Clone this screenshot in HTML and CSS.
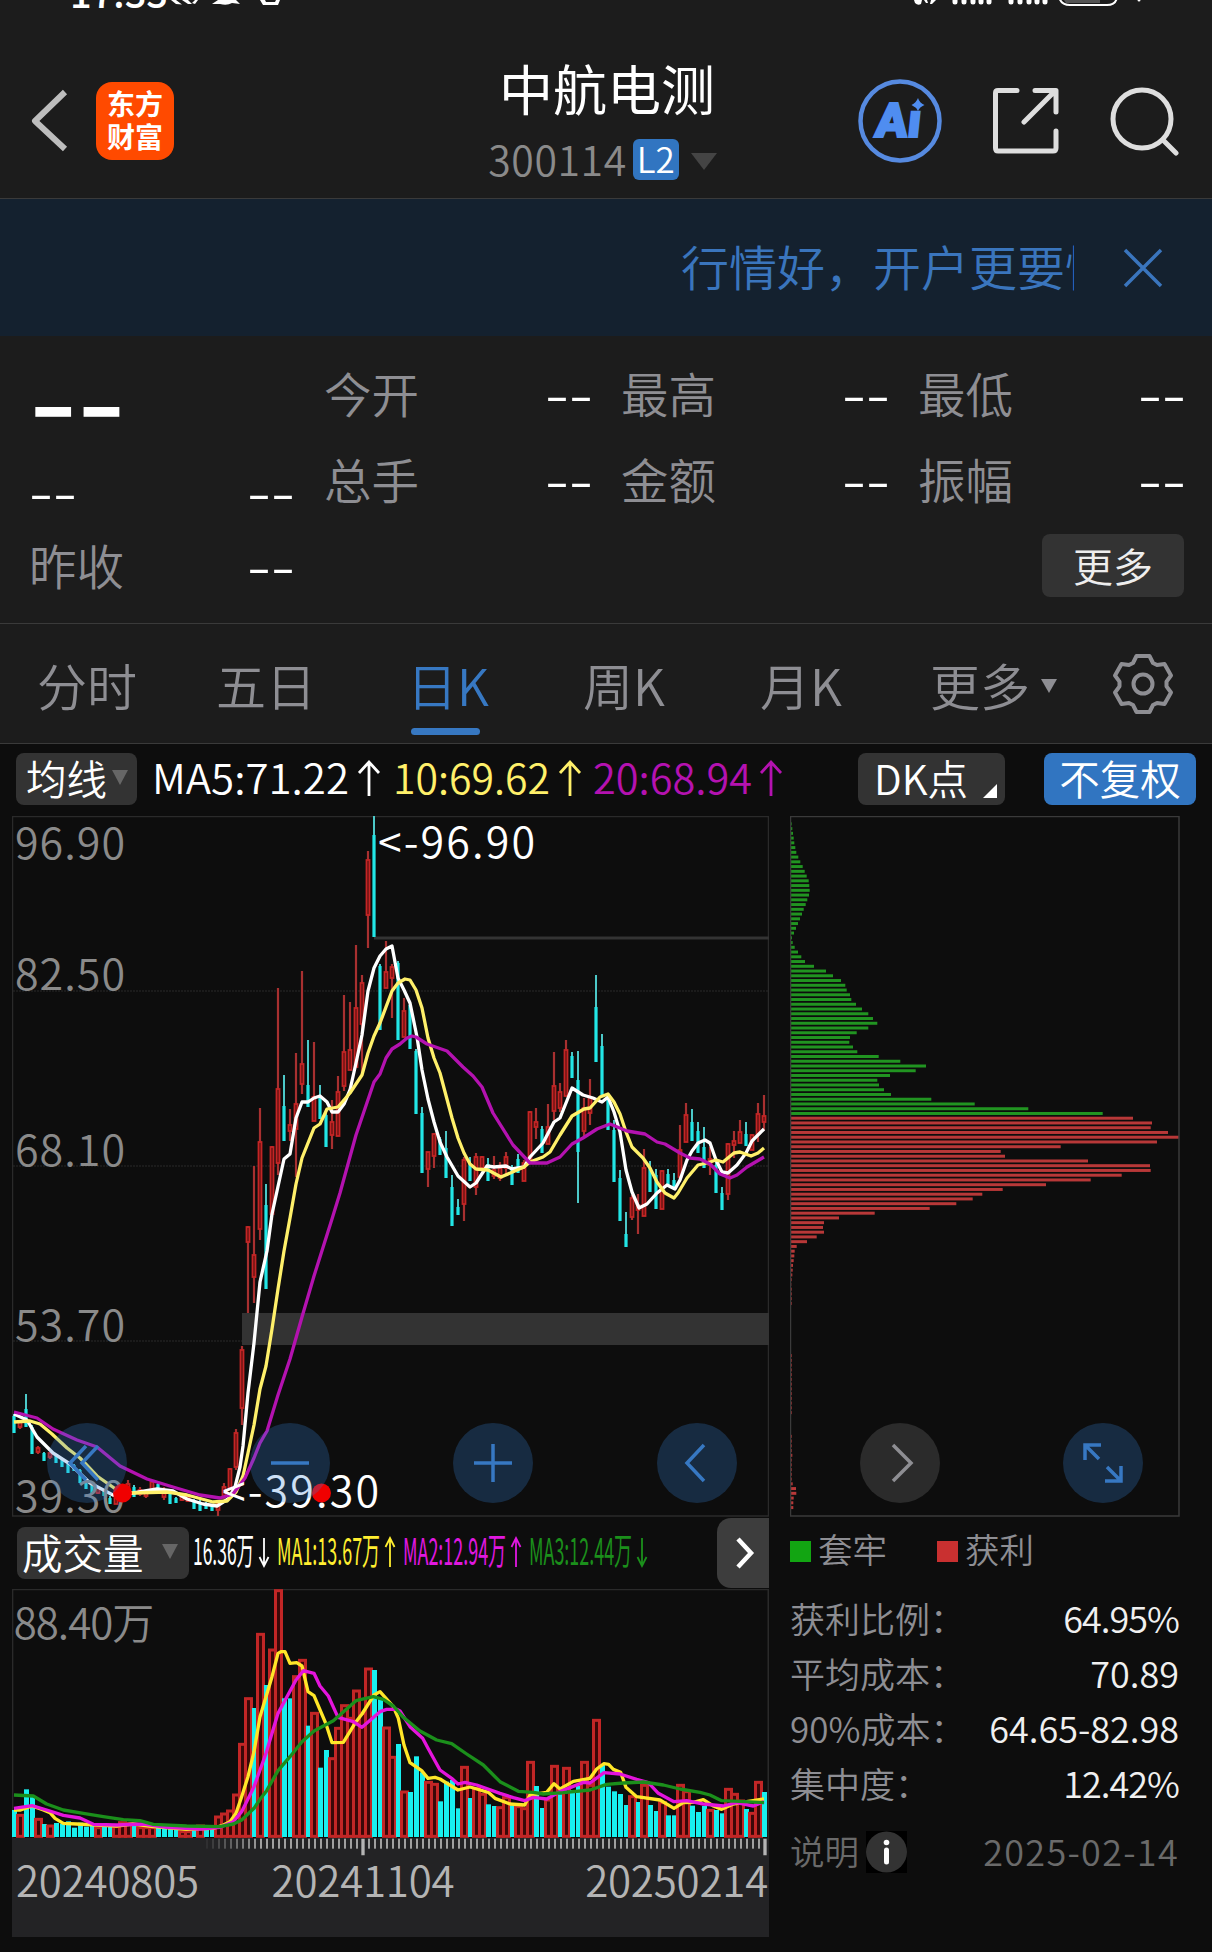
FILE: index.html
```html
<!DOCTYPE html>
<html lang="zh-CN">
<head>
    <meta charset="UTF-8">
    <meta name="viewport" content="width=device-width, initial-scale=1.0">
    <title>中航电测 300114</title>
    <link rel="stylesheet" href="styles.css">
</head>
<body>
    <div class="status-bar">
        <div class="status-left">
            <span class="time">17:33</span>
            <svg width="130" height="8" viewBox="0 0 130 8" fill="#fff">
                <path d="M9 0L14 4L20 4.500L14 0ZM20 0L26 4L30 4L26 0ZM30 3L33 4L36 0H33Z"/>
                <path d="M50 4L56 0H74L78 4L70 3Q65 6 58 4Z"/>
                <path d="M98 0H103L104 2H113L114 0H118L116 5H101Z"/>
            </svg>
        </div>
        <svg width="240" height="8" viewBox="0 0 240 8" fill="#fff">
            <path d="M0 0H8L7 4Q4 6 1 3ZM10 0H13L14 3H12ZM17 0H22L18 4H16Z"/>
            <path d="M41 0V2M50 0V2M59 0V2M67 0V2M75 0V2M97 0V2M106 0V2M115 0V2M123 0V2M131 0V2" stroke="#fff" stroke-width="5" stroke-linecap="round"/>
            <path d="M150 0H186V3H152Z" fill="#555"/>
            <path d="M145 -3Q147 5 156 5H193Q202 5 203 -3" fill="none" stroke="#fff" stroke-width="2"/>
            <circle cx="225" cy="0" r="1.500"/>
        </svg>
    </div>

    <header class="header">
        <div class="header-side">
            <svg class="back" width="38" height="64" viewBox="0 0 38 64"><path d="M35 3L5 32L35 60" fill="none" stroke="#bdbdbd" stroke-width="6" stroke-linejoin="round"/></svg>
            <div class="logo">东方<br>财富</div>
        </div>
        <div class="stock">
            <div class="stock-name">中航电测</div>
            <div class="stock-code"><span class="code">300114</span><span class="level">L2</span><i class="tri tri-code"></i></div>
        </div>
        <div class="header-side header-right">
            <svg width="84" height="84" viewBox="0 0 84 84">
                <circle cx="42" cy="42" r="39.500" fill="none" stroke="#568ae0" stroke-width="4.500"/>
                <text class="ai-text" x="22" y="58" textLength="46" lengthAdjust="spacingAndGlyphs" transform="skewX(-6)">Aı</text>
                <path d="M60 19Q61.500 24 66.500 26Q61.500 28 60 32Q58 28 53.500 26Q58 24 60 19Z" fill="#4f8df0"/>
            </svg>
            <svg width="68" height="68" viewBox="0 0 68 68" fill="none" stroke="#dedede" stroke-width="5" stroke-linecap="round" stroke-linejoin="round">
                <path d="M25 3.500H6Q3.500 3.500 3.500 6V61Q3.500 64 6 64H61Q64 64 64 61V44M43 3.500H64V25M63 4L32 35"/>
            </svg>
            <svg width="70" height="70" viewBox="0 0 70 70" fill="none" stroke="#dedede" stroke-width="5" stroke-linecap="round">
                <circle cx="33" cy="33" r="29"/><path d="M55 55L67 67"/>
            </svg>
        </div>
    </header>

    <div class="notice">
        <div class="notice-text">行情好，开户更要快</div>
        <svg width="40" height="40" viewBox="0 0 40 40"><path d="M2 2L38 38M38 2L2 38" stroke="#3a75bd" stroke-width="3.500"/></svg>
    </div>

    <section class="quote">
        <div class="quote-price">
            <div class="big-price"><b class="dash-big">--</b></div>
            <div class="price-row low"><span class="dash from-left">--</span><span class="dash">--</span></div>
            <div class="price-row"><span class="label">昨收</span><span class="dash">--</span></div>
        </div>
        <div class="quote-grid">
            <div class="item"><span class="label">今开</span><span class="dash">--</span></div>
            <div class="item"><span class="label">最高</span><span class="dash">--</span></div>
            <div class="item"><span class="label">最低</span><span class="dash">--</span></div>
            <div class="item"><span class="label">总手</span><span class="dash">--</span></div>
            <div class="item"><span class="label">金额</span><span class="dash">--</span></div>
            <div class="item"><span class="label">振幅</span><span class="dash">--</span></div>
            <button class="more">更多</button>
        </div>
    </section>

    <nav class="tabs">
        <a class="tab">分时</a>
        <a class="tab">五日</a>
        <a class="tab active">日K</a>
        <a class="tab">周K</a>
        <a class="tab">月K</a>
        <a class="tab">更多<i class="tri tri-tab"></i></a>
        <svg class="gear" width="62" height="62" viewBox="-31 -31 62 62" fill="none" stroke="#8e8e93" stroke-width="4" stroke-linejoin="round">
            <path d="M-10 -21L-6.500 -28H6.500L10 -21L14 -19L21.500 -20L28 -8.500L23.500 -2.300V2.300L28 8.500L21.500 20L14 19L10 21L6.500 28H-6.500L-10 21L-14 19L-21.500 20L-28 8.500L-23.500 2.300V-2.300L-28 -8.500L-21.500 -20L-14 -19Z"/>
            <circle r="9.500"/>
        </svg>
    </nav>

    <main class="charts">
        <div class="ma-bar">
            <button class="pill pill-ma">均线<i class="tri tri-ma"></i></button>
            <svg class="ma-text" width="640" height="52" viewBox="147 753 640 52">
                <text x="152" y="794" textLength="197" lengthAdjust="spacingAndGlyphs" fill="#fff">MA5:71.22</text>
                <text x="393" y="794" textLength="157" lengthAdjust="spacingAndGlyphs" fill="#fff06a">10:69.62</text>
                <text x="593" y="794" textLength="159" lengthAdjust="spacingAndGlyphs" fill="#b412b0">20:68.94</text>
                <g fill="none" stroke-width="2.800">
                    <path d="M369 796V762M359 773L369 762L379 773" stroke="#fff"/>
                    <path d="M570 796V762M560 773L570 762L580 773" stroke="#fff06a"/>
                    <path d="M771 796V762M761 773L771 762L781 773" stroke="#b412b0"/>
                </g>
            </svg>
            <button class="pill pill-dk">DK点<i class="corner"></i></button>
            <button class="pill pill-fq">不复权</button>
        </div>

        <div class="columns">
            <div class="left">
                <svg class="kline" width="757" height="701" viewBox="12 816 757 701">
                    <g fill="none" stroke="#2a2a2a">
                        <rect x="12.500" y="816.500" width="756" height="699.500" stroke-width="1.500"/>
                        <path d="M13 991H768M13 1166H768M13 1341H768" stroke-dasharray="2 1"/>
                    </g>
                    <rect x="242" y="1313" width="527" height="32" fill="#333"/>
                    <path d="M374 938H769" stroke="#333" stroke-width="3"/>
                    <g id="candles"></g>
                    <g fill="none" stroke-width="3.300" stroke-linejoin="round">
                        <polyline stroke="#fff" points="14,1414 27,1420 37,1437 53,1453 70,1464 90,1483 113,1495 133,1493 157,1489 173,1491 187,1499 203,1504 217,1506 228,1499 235,1487 240,1467 243,1446 248,1393 254,1343 260,1282 267,1251 272,1214 284,1159 290,1154 296,1118 302,1102 308,1102 314,1098 320,1096 327,1102 332,1112 338,1112 344,1104 350,1090 356,1063 362,1035 368,991 374,968 380,956 386,949 392,946 398,978 404,990 410,1003 417,1037 422,1070 428,1099 434,1122 440,1142 447,1157 458,1176 470,1187 476,1183 487,1166 494,1167 506,1166 512,1169 524,1167 530,1157 543,1143 554,1122 560,1118 572,1088 583,1095 593,1098 602,1102 608,1097 614,1112 620,1132 626,1170 632,1192 639,1208 647,1204 657,1193 667,1185 675,1189 680,1180 687,1160 692,1151 698,1143 705,1140 710,1143 716,1160 722,1172 728,1173 737,1165 746,1153 752,1141 764,1129"/>
                        <polyline stroke="#fff06a" points="14,1422 30,1421 40,1424 52,1434 67,1448 80,1458 97,1476 117,1490 133,1493 167,1492 187,1495 213,1502 227,1501 236,1492 243,1476 248,1453 254,1425 260,1389 266,1366 272,1329 278,1289 284,1251 290,1218 296,1184 302,1158 314,1128 320,1124 327,1109 338,1107 350,1093 362,1075 368,1053 374,1036 380,1023 392,991 398,983 405,979 410,980 416,990 422,1008 428,1038 434,1058 440,1073 452,1118 458,1138 464,1153 470,1164 476,1169 488,1170 501,1177 524,1167 530,1162 543,1157 550,1152 560,1135 572,1116 584,1109 590,1108 600,1097 608,1094 614,1102 620,1114 626,1132 632,1147 643,1158 650,1168 657,1182 665,1193 674,1198 678,1193 687,1178 698,1165 707,1163 716,1160 723,1162 734,1153 740,1152 751,1156 758,1153 764,1148"/>
                        <polyline stroke="#b412b0" points="14,1412 37,1418 53,1429 77,1440 97,1447 120,1466 147,1479 173,1487 200,1495 220,1498 233,1494 245,1478 254,1458 260,1443 267,1431 278,1395 290,1359 302,1317 314,1276 332,1219 340,1193 356,1135 374,1082 380,1074 386,1058 392,1049 400,1044 407,1038 412,1036 416,1037 427,1044 447,1051 463,1067 473,1076 482,1087 493,1113 513,1145 530,1163 547,1163 560,1157 572,1144 583,1138 597,1129 610,1124 627,1131 645,1134 657,1142 665,1144 680,1153 690,1158 700,1159 710,1164 720,1174 730,1178 737,1175 747,1167 764,1157"/>
                    </g>
                    <g class="axis-text">
                        <text x="15" y="859" textLength="110">96.90</text>
                        <text x="15" y="990" textLength="110">82.50</text>
                        <text x="15" y="1166" textLength="110">68.10</text>
                        <text x="15" y="1341" textLength="110">53.70</text>
                        <text x="15" y="1512" textLength="110">39.30</text>
                    </g>
                    <g class="mark-text">
                        <text x="378" y="858" textLength="157">&lt;-96.90</text>
                        <text x="222" y="1507" textLength="157">&lt;-39.30</text>
                    </g>
                    <circle cx="122.500" cy="1493" r="9.500" fill="#f00000"/>
                    <circle cx="321.500" cy="1493" r="9.500" fill="#f00000"/>
                </svg>

                <div class="vol-bar">
                    <button class="pill pill-vol">成交量<i class="tri tri-ma"></i></button>
                    <svg class="vol-text" width="460" height="52" viewBox="192 1527 460 52">
                        <text x="193" y="1565" textLength="61" lengthAdjust="spacingAndGlyphs" fill="#fff">16.36万</text>
                        <text x="277" y="1565" textLength="103" lengthAdjust="spacingAndGlyphs" fill="#ffee30">MA1:13.67万</text>
                        <text x="403" y="1565" textLength="103" lengthAdjust="spacingAndGlyphs" fill="#e018e0">MA2:12.94万</text>
                        <text x="529" y="1565" textLength="103" lengthAdjust="spacingAndGlyphs" fill="#1b8f1b">MA3:12.44万</text>
                        <g fill="none" stroke-width="1.800">
                            <path d="M264 1538V1566M259.500 1557L264 1566L268.500 1557" stroke="#fff"/>
                            <path d="M390 1567V1538M385.500 1547L390 1538L394.500 1547" stroke="#ffee30"/>
                            <path d="M516 1567V1538M511.500 1547L516 1538L520.500 1547" stroke="#e018e0"/>
                            <path d="M642 1538V1566M637.500 1557L642 1566L646.500 1557" stroke="#1b8f1b"/>
                        </g>
                    </svg>
                    <button class="vol-next"><svg width="24" height="36" viewBox="0 0 24 36"><path d="M5 4L18 18L5 32" fill="none" stroke="#fff" stroke-width="4.500"/></svg></button>
                </div>

                <!-- volume units are thirds of a pixel -->
                <svg class="volume" width="757" height="249" viewBox="36 27 2271 747">
                    <path d="M37.500 774V28.500H2305V774" fill="none" stroke="#2a2a2a" stroke-width="5"/>
                    <text class="vol-max" x="41" y="177" textLength="422">88.40万</text>
                    <g id="bars"></g>
                    <g fill="none" stroke-width="10" stroke-linejoin="round">
                        <polyline stroke="#ffe628" points="42,690 62,690 96,678 130,690 150,698 165,715 190,730 230,732 290,735 350,738 400,732 460,740 560,748 640,745 670,735 690,725 708,700 725,650 744,590 762,515 780,410 798,350 816,290 834,220 843,215 855,215 870,250 890,248 906,258 924,335 942,347 978,432 996,488 1030,487 1068,425 1086,402 1122,345 1140,335 1180,380 1195,415 1212,495 1230,548 1265,572 1284,595 1305,592 1320,597 1374,630 1410,621 1465,637 1485,655 1530,672 1574,675 1590,645 1640,637 1662,611 1680,627 1720,604 1770,595 1790,567 1812,551 1826,553 1840,568 1862,577 1878,622 1910,650 1980,660 2022,685 2050,668 2080,667 2110,659 2140,678 2165,688 2200,672 2240,665 2292,657"/>
                        <polyline stroke="#e414dc" points="42,685 96,677 140,690 190,706 240,714 280,733 350,735 430,732 500,742 600,747 660,742 700,725 725,695 762,620 780,570 798,520 834,400 888,300 910,272 942,280 960,318 985,348 1014,412 1060,425 1086,442 1140,395 1160,388 1190,388 1200,393 1230,440 1268,475 1284,505 1320,570 1355,595 1374,612 1395,607 1430,615 1500,640 1540,653 1574,662 1600,652 1640,657 1680,635 1750,607 1770,609 1812,578 1860,582 1910,598 1945,608 1975,640 2022,665 2060,662 2110,672 2170,678 2210,668 2260,678 2292,665"/>
                        <polyline stroke="#1b8f1b" points="42,645 100,648 140,672 190,690 250,700 310,710 370,719 420,722 460,733 560,738 660,740 700,732 725,720 762,685 780,658 800,632 834,572 870,530 906,485 942,453 1000,422 1068,362 1120,350 1150,358 1180,378 1210,412 1260,453 1310,480 1355,491 1400,522 1450,555 1500,605 1555,634 1600,637 1630,642 1690,638 1770,630 1820,613 1870,609 1930,606 1990,615 2040,627 2100,637 2130,645 2165,662 2220,664 2292,668"/>
                    </g>
                </svg>
                <div class="timeline">
                    <svg width="757" height="20" viewBox="36 780 2271 60" id="ticks"></svg>
                    <div class="dates"><span>20240805</span><span>20241104</span><span>20250214</span></div>
                </div>
            </div>

            <div class="right">
                <svg class="chips" width="390" height="701" viewBox="790 816 390 701">
                    <g id="chips"></g>
                    <rect x="790.500" y="816.500" width="388.500" height="699.500" fill="none" stroke="#3a3a3a" stroke-width="1.500"/>
                </svg>
                <div class="legend">
                    <span><i class="square green"></i>套牢</span>
                    <span><i class="square red"></i>获利</span>
                </div>
                <div class="stats">
                    <div class="stat"><span>获利比例：</span><b class="percent">64.95%</b></div>
                    <div class="stat"><span>平均成本：</span><b>70.89</b></div>
                    <div class="stat"><span>90%成本：</span><b>64.65-82.98</b></div>
                    <div class="stat"><span>集中度：</span><b class="percent">12.42%</b></div>
                </div>
                <div class="explain">
                    <span>说明</span>
                    <svg width="41" height="42" viewBox="0 0 41 42"><rect width="41" height="42" fill="#000"/><circle cx="20.500" cy="21" r="20.500" fill="#333"/><circle cx="20.500" cy="11.500" r="2.800" fill="#fff"/><path d="M20.500 19V31" stroke="#fff" stroke-width="5" stroke-linecap="round"/></svg>
                    <span class="date">2025-02-14</span>
                </div>
            </div>

            <div class="controls">
                <button class="ctl"><svg viewBox="-40 -40 80 80"><path d="M-1 -17L-17 0L-1 17M11 -17L-5 0L11 17"/></svg></button>
                <button class="ctl"><svg viewBox="-40 -40 80 80"><path d="M-19 0H19"/></svg></button>
                <button class="ctl"><svg viewBox="-40 -40 80 80"><path d="M-19 0H19M0 -19V19"/></svg></button>
                <button class="ctl"><svg viewBox="-40 -40 80 80"><path d="M7 -18L-10 0L7 18"/></svg></button>
                <button class="ctl gray"><svg viewBox="-40 -40 80 80"><path d="M-7 -18L11 0L-7 18"/></svg></button>
                <button class="ctl"><svg viewBox="-40 -40 80 80"><path d="M-18 -3V-18H-2M-17 -17L-4 -4M18 3V18H2M17 17L4 4"/></svg></button>
            </div>
        </div>
    </main>

    <script>
        // direction, high, body top, body bottom, low
        const candles = [
            ['d',1414,1416,1433,1433],['u',1420,1422,1427,1429],['d',1394,1409,1427,1427],['d',1425,1427,1454,1454],['u',1446,1448,1452,1454],
            ['d',1452,1453,1461,1461],['u',1452,1453,1457,1459],['d',1455,1456,1463,1463],['d',1458,1459,1467,1467],['d',1463,1464,1473,1473],
            ['d',1464,1465,1471,1471],['d',1469,1470,1483,1483],['d',1481,1482,1489,1489],['d',1483,1484,1493,1493],['u',1487,1488,1493,1494],
            ['d',1489,1490,1496,1496],['d',1496,1498,1504,1504],['u',1490,1492,1504,1504],['u',1487,1489,1498,1500],['u',1480,1484,1494,1496],
            ['d',1485,1487,1497,1497],['u',1487,1490,1494,1496],['u',1490,1492,1496,1498],['u',1480,1482,1490,1492],['d',1483,1484,1490,1490],
            ['u',1487,1490,1497,1500],['d',1491,1493,1504,1504],['d',1497,1498,1503,1503],['u',1494,1496,1500,1501],['u',1495,1497,1501,1502],
            ['d',1499,1500,1509,1509],['d',1500,1502,1511,1511],['d',1502,1504,1509,1509],['d',1504,1505,1511,1511],['u',1501,1504,1510,1516],
            ['u',1483,1487,1497,1499],['u',1468,1469,1488,1489],['u',1429,1433,1467,1470],['u',1346,1350,1408,1425],['u',1226,1227,1242,1313],
            ['u',1166,1255,1277,1303],['u',1108,1142,1229,1240],['d',1184,1205,1289,1289],['u',1146,1147,1214,1220],['u',988,1089,1163,1175],
            ['d',1075,1106,1141,1141],['u',1109,1125,1131,1141],['u',1053,1104,1129,1177],['u',971,1064,1084,1094],['d',1040,1085,1107,1107],
            ['u',1042,1097,1121,1121],['d',1085,1097,1119,1119],['d',1111,1115,1147,1147],['u',1100,1122,1135,1149],['u',1076,1092,1136,1136],
            ['u',995,1052,1086,1091],['u',1002,1050,1070,1070],['u',945,1008,1067,1067],['u',975,983,1024,1074],['u',851,860,915,948],
            ['d',816,835,937,937],['d',964,966,1030,1030],['u',941,972,988,988],['u',964,967,978,1018],['d',961,963,1040,1040],
            ['u',998,1011,1037,1037],['d',1003,1005,1049,1049],['d',1049,1051,1114,1114],['d',1107,1113,1173,1173],['u',1152,1152,1169,1187],
            ['u',1133,1134,1156,1168],['d',1137,1139,1155,1155],['d',1131,1148,1178,1178],['d',1175,1187,1226,1226],['d',1199,1207,1215,1215],
            ['u',1157,1160,1204,1221],['d',1157,1164,1181,1181],['u',1153,1157,1187,1195],['u',1156,1157,1168,1168],['d',1158,1164,1181,1181],
            ['u',1156,1170,1176,1179],['u',1162,1168,1178,1181],['u',1152,1157,1168,1176],['d',1165,1168,1185,1185],['d',1154,1159,1173,1173],
            ['u',1160,1163,1181,1181],['u',1111,1112,1160,1160],['u',1108,1122,1127,1139],['d',1126,1129,1153,1153],['u',1104,1127,1144,1144],
            ['u',1052,1086,1111,1120],['u',1083,1092,1108,1112],['u',1040,1050,1096,1096],['d',1052,1056,1078,1078],['d',1051,1080,1152,1203],
            ['u',1098,1108,1131,1137],['u',1079,1097,1113,1125],['d',975,1007,1062,1062],['d',1034,1046,1097,1097],['d',1095,1097,1130,1130],
            ['d',1120,1130,1182,1182],['d',1170,1178,1221,1221],['d',1212,1234,1247,1247],['u',1195,1198,1217,1220],['u',1194,1205,1210,1234],
            ['u',1149,1168,1216,1216],['d',1161,1168,1192,1192],['d',1169,1175,1209,1209],['u',1170,1171,1209,1209],['d',1169,1174,1185,1185],
            ['d',1173,1180,1187,1187],['u',1125,1150,1177,1182],['u',1103,1115,1142,1142],['d',1109,1122,1141,1141],['d',1122,1131,1153,1153],
            ['d',1127,1147,1168,1168],['u',1147,1159,1165,1175],['d',1162,1165,1193,1193],['d',1187,1193,1210,1210],['u',1143,1144,1194,1200],
            ['u',1131,1141,1145,1158],['u',1120,1132,1143,1143],['d',1122,1134,1146,1146],['u',1134,1135,1150,1150],['u',1103,1114,1134,1142],
            ['u',1095,1116,1122,1130]
        ];
        let html = '';
        candles.forEach(([dir, high, top, bottom, low], i) => {
            const x = 14 + i * 6;
            if (dir === 'd') {
                html += `<rect x="${x - 1}" y="${high}" width="2" height="${low - high}" fill="#4cc8c8"/>`;
                html += `<rect x="${x - 1.6}" y="${top}" width="3.2" height="${bottom - top}" fill="#22e6e6"/>`;
            } else {
                html += `<path d="M${x} ${high}V${top}M${x} ${bottom}V${low}" stroke="#a83030" stroke-width="2.2"/>`;
                html += `<rect x="${x - 1.5}" y="${top}" width="3" height="${bottom - top}" fill="#5a1010" stroke="#c42525" stroke-width="1.8"/>`;
            }
        });
        document.getElementById('candles').innerHTML = html;

        const volumes = ('d690 u703 d628 d650 u715 d732 u735 d729 d731 d724 d743 d728 d740 d737 u740 d740 d740 u737 u725 u728 d737 u740 u740 u740 d742 d745 d747 d750 u752 u752 ' +
            'd750 u735 d750 d750 u708 u699 u690 u642 u490 u353 d384 u160 d315 u207 u29 d355 d355 u287 u238 d437 u397 d563 d510 u533 u442 u374 u412 u330 u397 u264 ' +
            'd270 d355 u441 u529 d492 u633 d636 d529 d577 u604 u610 d664 d605 d600 d685 u559 d654 u622 u640 d673 d678 u680 u650 d676 u677 u683 u544 d618 d684 u657 ' +
            'u556 d643 u562 d630 d617 u544 u613 u418 d555 d620 d634 d642 d675 u647 d666 u613 d675 d693 u665 d706 d706 u613 u632 d677 d696 d678 u688 d690 d700 u625 ' +
            'u640 u660 d687 u697 u604 d636').split(' ');
        html = '';
        volumes.forEach((v, i) => {
            const x = 43 + i * 18;
            const top = Number(v.slice(1));
            if (v[0] === 'd') {
                html += `<rect x="${x - 7}" y="${top}" width="15" height="${771 - top}" fill="#18efef"/>`;
            } else {
                html += `<rect x="${x - 8.5}" y="${top + 3}" width="18" height="${766 - top}" fill="#3a0808" stroke="#c22626" stroke-width="9"/>`;
            }
        });
        document.getElementById('bars').innerHTML = html;

        html = '';
        for (let i = 32; i < 125; i++) {
            if (i === 58) continue;
            html += `<rect x="${42 + i * 18}" y="782" width="6" height="30" fill="#a0a0a0" opacity="${Math.min(1, (i - 31) / 10)}"/>`;
        }
        html += '<path d="M1089 782V832M2295 782V832" stroke="#b4b4b4" stroke-width="10"/>';
        document.getElementById('ticks').innerHTML = html;

        // chip distribution, widths in thirds of a pixel, first 63 rows are above the close
        const zeros = n => Array(n).fill(0);
        const thin = n => Array(n).fill(5);
        const chips = [
            3,5,7,9,11,13,16,19,25,31,38,44,50,56,58,59,57,52,47,41,36,30,24,18,12,6,8,14,24,34,
            45,72,108,129,153,166,170,180,184,198,216,235,249,262,235,200,180,178,189,202,266,331,408,377,300,262,267,282,303,424,
            554,715,938,1029,1086,1082,1134,1167,1101,812,632,645,894,1080,1082,995,902,768,638,577,548,499,419,254,147,102,99,102,80,51,
            20,14,13,11,9,8,7,5,4,
            ...thin(4), ...zeros(10), ...thin(13), ...zeros(4), ...thin(4),
            7,5,5,5,5,5,8,18,19,11,10,10,3
        ];
        html = '';
        chips.forEach((w, i) => {
            html += `<rect x="790" y="${(817.6 + i * 4.748).toFixed(2)}" width="${(w / 3).toFixed(1)}" height="3" fill="${i < 63 ? '#219421' : '#b83838'}"/>`;
        });
        document.getElementById('chips').innerHTML = html;
    </script>
</body>
</html>
```

FILE: styles.css
```css
* {
    box-sizing: border-box;
}

body {
    margin: 0;
    width: 1212px;
    height: 1952px;
    overflow: hidden;
    background-color: #1c1c1c;
    color: #fff;
    font-family: "Noto Sans CJK SC", "Noto Sans", sans-serif;
    font-weight: 350;
}

button {
    font: inherit;
    color: inherit;
    border: none;
    padding: 0;
}

svg {
    display: block;
}

.tri {
    display: inline-block;
    border-style: solid;
    border-color: transparent;
    border-bottom-width: 0;
}

/* top */
.status-bar {
    height: 8px;
    padding: 0 58px 0 70px;
    display: flex;
    justify-content: space-between;
    overflow: hidden;
}

.status-left {
    display: flex;
    align-items: flex-start;
}

.time {
    width: 92px;
    height: 6px;
    display: flex;
    align-items: flex-end;
    font-size: 38px;
    font-weight: 500;
    line-height: 28px;
}

.header {
    height: 191px;
    padding: 0 33px 0 30px;
    display: flex;
    justify-content: space-between;
    border-bottom: 1px solid #3a3a3a;
}

.header-side {
    width: 360px;
    height: 84px;
    margin-top: 71px;
    display: flex;
    align-items: center;
}

.header-right {
    justify-content: space-between;
    width: 321px;
}

.logo {
    width: 78px;
    height: 78px;
    margin-left: 28px;
    padding-top: 5px;
    border-radius: 16px;
    background-color: #ff4a00;
    font-size: 28px;
    font-weight: 700;
    line-height: 33px;
    text-align: center;
}

.ai-text {
    font-family: Roboto, "Noto Sans", sans-serif;
    font-size: 48px;
    font-weight: 900;
    fill: #4f8df0;
    stroke: #4f8df0;
    stroke-width: 2px;
}

.stock {
    width: 440px;
    margin-left: -58px;
    margin-right: -12px;
    padding-top: 47px;
    text-align: center;
}

.stock-name {
    font-size: 54px;
    font-weight: 400;
    line-height: 66px;
    padding-left: 12px;
}

.stock-code {
    height: 42px;
    margin-top: 19px;
    padding-left: 3px;
    display: flex;
    align-items: center;
    justify-content: center;
}

.code {
    margin-top: -7px;
    font-size: 41px;
    letter-spacing: 0.6px;
    color: #8a8a8a;
    line-height: 42px;
}

.level {
    width: 46px;
    height: 41px;
    margin: -3px 0 0 6px;
    border-radius: 6px;
    background-color: #3175c1;
    font-size: 35px;
    line-height: 38px;
}

.tri-code {
    margin-left: 12px;
    border-width: 17px 13px 0;
    border-top-color: #444;
}

.notice {
    height: 137px;
    padding: 0 49px 0 681px;
    display: flex;
    align-items: center;
    justify-content: space-between;
    background-color: #14212f;
}

.notice-text {
    width: 393px;
    margin-top: -6px;
    overflow: hidden;
    white-space: nowrap;
    font-size: 48px;
    color: #3a75bd;
}

/* quote */
.quote {
    height: 288px;
    padding: 14px 28px 0 29px;
    display: flex;
    border-bottom: 1px solid #3a3a3a;
}

.quote-price {
    width: 262px;
    margin-right: 33px;
}

.big-price,
.price-row,
.item {
    height: 86px;
    display: flex;
    align-items: center;
    justify-content: space-between;
}

.label {
    font-size: 47.5px;
    color: #8e8e93;
    line-height: 60px;
}

.dash {
    margin: -3px -4px 0 0;
    font-size: 46px;
    font-weight: 400;
    line-height: 60px;
    transform: scaleX(1.5);
    transform-origin: right;
}

.from-left {
    transform-origin: left;
}

.low {
    padding-top: 25px;
}

.dash-big {
    padding-top: 10px;
    font-size: 92px;
    font-weight: 700;
    line-height: 60px;
    transform: scaleX(1.42);
    transform-origin: left;
}

.quote-grid {
    flex: 1;
    display: grid;
    grid-template-columns: 265px 265px 264px;
    column-gap: 32px;
    grid-auto-rows: 86px;
}

.more {
    grid-column: 3;
    justify-self: end;
    align-self: center;
    width: 142px;
    height: 63px;
    margin-right: -2px;
    border-radius: 8px;
    background-color: #333;
    font-size: 40px;
    line-height: 55px;
    color: #eee;
}

/* tabs */
.tabs {
    height: 120px;
    padding-left: 37px;
    display: grid;
    grid-template-columns: 179px 191px 176px 177px 170px 182px 62px;
    align-items: center;
    border-bottom: 1px solid #3a3a3a;
}

.tab {
    position: relative;
    font-size: 50px;
    line-height: 116px;
    color: #8e8e93;
}

.active {
    color: #3778c2;
}

.active::after {
    content: "";
    position: absolute;
    left: 4px;
    bottom: 7px;
    width: 69px;
    height: 7px;
    border-radius: 4px;
    background-color: #3778c2;
}

.tri-tab {
    margin-left: 11px;
    vertical-align: 13px;
    border-width: 14px 8px 0;
    border-top-color: #8e8e93;
}

/* charts */
.charts {
    height: 1208px;
    background-color: #0d0d0d;
}

.ma-bar {
    height: 72px;
    padding: 9px 16px 0;
    display: flex;
}

.pill {
    height: 52px;
    padding-bottom: 3px;
    border-radius: 8px;
    background-color: #333;
    font-size: 40.5px;
    line-height: 48px;
    display: flex;
    align-items: center;
}

.pill-ma {
    width: 121px;
    padding-left: 10px;
}

.tri-ma {
    margin-left: 5px;
    border-width: 15px 8px 0;
    border-top-color: #666;
}

.ma-text {
    margin-left: 10px;
    font-size: 41px;
}

.pill-dk {
    width: 147px;
    margin-left: 71px;
    padding-left: 16px;
}

.corner {
    align-self: flex-end;
    margin: 0 0 4px 15px;
    border-style: solid;
    border-width: 0 0 14px 14px;
    border-color: transparent transparent #fff;
}

.pill-fq {
    width: 152px;
    margin-left: 39px;
    justify-content: center;
    background-color: #3175c1;
}

.columns {
    position: relative;
    display: flex;
    padding-left: 12px;
}

.left {
    width: 757px;
}

.axis-text {
    font-size: 43px;
    fill: #8a8a8a;
}

.mark-text {
    font-size: 43px;
    fill: #fff;
}

.vol-bar {
    height: 72px;
    display: flex;
    align-items: center;
    padding-left: 5px;
}

.pill-vol {
    width: 172px;
    padding-left: 5px;
}

.pill-vol .tri-ma {
    margin-left: 18px;
}

.vol-text {
    margin-left: 3px;
    font-size: 37px;
    font-weight: 400;
}

.vol-next {
    width: 52px;
    height: 70px;
    margin-left: auto;
    padding-left: 16px;
    border-radius: 14px 0 0 14px;
    background-color: #3d3d3d;
}

.vol-max {
    font-size: 126px;
    fill: #8a8a8a;
}

.timeline {
    height: 99px;
    background-color: #232325;
}

.dates {
    display: flex;
    justify-content: space-between;
    padding: 0 1px 0 4px;
    font-size: 42px;
    line-height: 42px;
    letter-spacing: -0.2px;
    color: #b4b4b4;
}

.dates span:nth-child(2) {
    margin-right: 58px;
}

.right {
    width: 390px;
    margin-left: 21px;
}

.legend {
    height: 70px;
    display: flex;
    gap: 50px;
    font-size: 34.5px;
    line-height: 63px;
    color: #8e8e93;
}

.legend span {
    display: flex;
}

.square {
    width: 21px;
    height: 21px;
    margin: 24px 7px 0 0;
}

.green {
    background-color: #12a512;
}

.red {
    background-color: #c93030;
}

.stats {
    padding: 3px 1px 0 0;
}

.stat {
    height: 55px;
    display: flex;
    justify-content: space-between;
    font-size: 35px;
    line-height: 55px;
    color: #8e8e93;
}

.stat b {
    font-size: 36px;
    font-weight: 350;
    color: #f0f0f0;
}

.stat .percent {
    letter-spacing: -1px;
}

.explain {
    height: 76px;
    display: flex;
    align-items: center;
    padding: 8px 1px 0 0;
    font-size: 34.5px;
    line-height: 48px;
    color: #6a6a6a;
}

.explain span {
    margin-top: -4px;
}

.explain svg {
    margin-left: 7px;
}

.explain .date {
    margin-left: auto;
    font-size: 36px;
    letter-spacing: 1.3px;
}

/* round buttons lie over both charts */
.controls {
    position: absolute;
    left: 47px;
    top: 607px;
    width: 1096px;
    display: flex;
    justify-content: space-between;
}

.ctl {
    width: 80px;
    height: 80px;
    border-radius: 50%;
    background-color: rgba(55, 130, 217, 0.26);
}

.ctl path {
    fill: none;
    stroke: #3778c2;
    stroke-width: 3.5;
}

.gray {
    background-color: #2b2b2b;
}

.gray path {
    stroke: #8e8e93;
}
```
